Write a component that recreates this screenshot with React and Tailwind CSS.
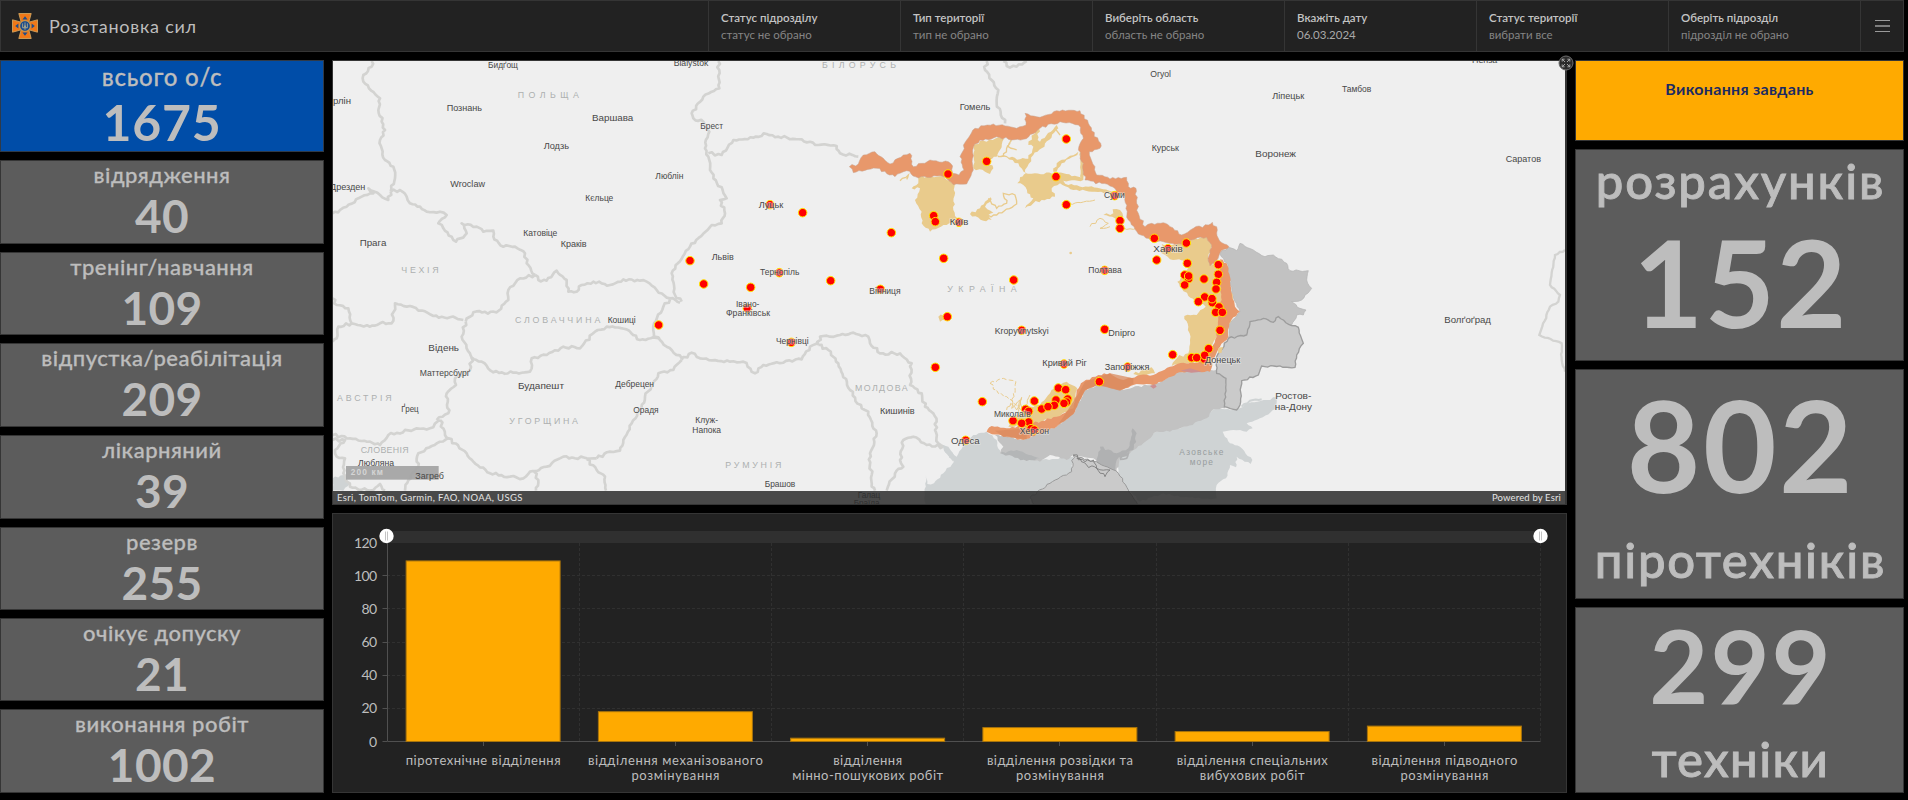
import React from "react";

const filters = [
  ["Статус підрозділу", "статус не обрано"],
  ["Тип території", "тип не обрано"],
  ["Виберіть область", "область не обрано"],
  ["Вкажіть дату", "06.03.2024"],
  ["Статус території", "вибрати все"],
  ["Оберіть підрозділ", "підрозділ не обрано"],
];

const stats = [
  ["відрядження", "40", "h-[84px]"],
  ["тренінг/навчання", "109", "h-[83px]"],
  ["відпустка/реабілітація", "209", "h-[84px]"],
  ["лікарняний", "39", "h-[84px]"],
  ["резерв", "255", "h-[83px]"],
  ["очікує допуску", "21", "h-[83px]"],
  ["виконання робіт", "1002", "h-[84px]"],
];

const bars = [
  [109, ["піротехнічне відділення"], [155]],
  [18, ["відділення механізованого", "розмінування"], [175, 88]],
  [2, ["відділення", "мінно-пошукових робіт"], [69, 151]],
  [8.4, ["відділення розвідки та", "розмінування"], [146, 88]],
  [6, ["відділення спеціальних", "вибухових робіт"], [151, 105]],
  [9.3, ["відділення підводного", "розмінування"], [146, 88]],
];

// Fractal midpoint displacement that turns coarse outlines into natural ones.
function rough(points, amp = 5, closed = false) {
  let seed = 7;
  const rnd = () => {
    seed = (seed * 16807) % 2147483647;
    return seed / 2147483647 - 0.5;
  };
  const src = points.trim().split(/\s+/).map((p) => p.split(",").map(Number));
  if (closed) src.push(src[0]);
  const out = [src[0]];
  for (let i = 1; i < src.length; i++) {
    const [x0, y0] = src[i - 1];
    const [x1, y1] = src[i];
    const len = Math.hypot(x1 - x0, y1 - y0) || 1;
    const n = Math.max(1, Math.round(len / 9));
    for (let k = 1; k < n; k++) {
      const d = rnd() * amp * 2;
      const t = k / n;
      out.push([x0 + (x1 - x0) * t - ((y1 - y0) / len) * d, y0 + (y1 - y0) * t + ((x1 - x0) / len) * d]);
    }
    out.push([x1, y1]);
  }
  return "M" + out.map((p) => p[0].toFixed(1) + " " + p[1].toFixed(1)).join("L") + (closed ? "Z" : "");
}

const bordersWest = [
  "125,3 125,20 100,45 100,65 150,115 145,150 165,210 150,240 165,300 190,320 195,355 182,395",
  "182,395 175,420 150,405 115,385 130,400 95,410 50,440 30,450 8,460",
  "182,395 210,390 230,410 240,430 270,440 290,455 330,455 350,465 325,490 340,505 365,530 378,545 410,520 395,490 440,500 460,515 490,512 490,530 520,560 555,560 585,580 590,610 615,645",
  "615,645 625,660 650,662 680,632 710,660 715,695 740,695 755,675 790,665 815,670 840,675 880,658 930,662 950,665 980,690 1020,715 1050,728",
  "615,645 570,655 535,690 535,720 500,757 430,757 407,785",
  "8,715 20,735 55,745 65,790 120,800 150,790 185,790 195,730 240,738 310,768 360,772 400,780",
  "65,790 25,800 20,835 8,845",
  "407,785 395,830 420,880 425,893 455,905 490,937 550,938 600,935 605,895 650,885 700,860 750,865 795,815 830,800 890,808 930,840 970,832 990,835",
  "425,893 420,930 375,955 378,975 350,1000 355,1060 320,1080",
  "8,1125 60,1135 120,1145 150,1155 175,1125 260,1105 300,1105 330,1080",
  "330,1080 345,1125 355,1135 265,1180 260,1205 265,1220 235,1260 225,1292",
  "8,1140 45,1140 15,1170 20,1190 45,1195 40,1240 60,1280 120,1292 150,1272 165,1292",
  "355,1135 410,1180 430,1205 480,1240 540,1250 580,1255 600,1235 650,1220 700,1190 770,1195 800,1195",
  "612,1235 625,1260 618,1292",
  "770,1198 800,1230 825,1250 828,1292",
  "800,1195 840,1175 870,1172 880,1140 905,1090 930,1050 945,1010 985,940 1030,930 1055,900",
  "1165,3 1168,85 1120,110 1085,160 1090,175 1120,185 1138,215 1125,265 1135,290 1140,330 1190,415 1170,420 1185,460 1175,490 1145,495 1080,560 1025,640 1035,705 1055,725",
  "1020,718 1000,740 972,790 972,830 985,832 1010,860 1055,895",
  "1055,900 1085,878 1110,895 1200,905 1240,905 1275,940 1300,915 1340,907 1415,898 1440,860 1465,845",
  "1135,280 1175,285 1210,240 1270,233 1310,222 1345,230 1415,238 1465,255 1520,258 1530,280 1585,290",
];

const bordersMid = [
  "235,855 240,830 270,830 300,825 340,818 385,830 390,850 420,880 480,880 515,910 510,975 545,1000 555,1040 580,1060 590,1085 585,1110 595,1150 610,1160",
  "235,855 265,870 295,910 330,990 365,1045 385,1055 410,1120 390,1180 395,1280 405,1292",
  "610,1160 560,1155 520,1130 490,1140 480,1200 490,1220 465,1240 440,1292",
  "740,3 735,30 775,90 770,130 795,190",
  "790,3 800,18 830,20 860,3",
];

const borderEast = "1335,570 1305,585 1290,675 1320,705 1315,725 1290,740 1258,825 1325,850 1325,900 1335,935";

const dotsWest = [[1080, 602], [1121, 672], [986, 795], [1252, 745]];
const dotsMid = [
  [32, 682], [90, 434], [188, 458], [118, 638], [272, 662], [421, 688], [154, 847], [454, 518], [611, 595], [624, 342], [740, 304], [948, 350],
  [979, 237], [979, 434], [581, 467], [586, 485], [657, 487], [821, 660], [622, 770], [845, 811], [1094, 808], [1094, 631], [1124, 407],
  [1140, 482], [1140, 505], [586, 922], [972, 912], [1163, 921], [1078, 965], [727, 1025], [883, 1023], [955, 984], [977, 989], [948, 1020],
  [983, 1017], [980, 1026], [972, 1030], [943, 1036], [905, 1047], [924, 1040], [857, 1048], [866, 1054], [819, 1082], [866, 1086], [845, 1090],
  [873, 1106], [883, 1110], [677, 1141], [1243, 535], [1250, 600],
];
const dotsEast = [
  [199, 549], [144, 566], [202, 610], [295, 614], [295, 643], [194, 645], [206, 656], [206, 648], [194, 675], [252, 657], [290, 667], [288, 687],
  [254, 711], [277, 728], [276, 716], [235, 725], [297, 741], [287, 757], [307, 757], [300, 811], [266, 866], [253, 897], [254, 886], [215, 893],
  [230, 893], [158, 884],
];

// label, centre x, baseline y, width
const cities = [
  ["Бидґощ", 519, 23, 90], ["Bialystok", 1083, 19, 104], ["рлін", 36, 131, 54], ["Познань", 403, 153, 106], ["Варшава", 848, 184, 124],
  ["Лодзь", 679, 267, 76], ["Брест", 1145, 208, 68], ["Люблін", 1018, 357, 84], ["Дрезден", 53, 391, 106], ["Wroclaw", 413, 381, 104],
  ["Кєльце", 808, 423, 84], ["Катовіце", 631, 528, 102], ["Краків", 731, 562, 78], ["Прага", 129, 559, 80], ["Львів", 1178, 600, 66],
  ["Кошиці", 875, 788, 84], ["Відень", 341, 872, 92], ["Маттерсбурґ", 345, 949, 152], ["Будапешт", 633, 988, 138], ["Дебрецен", 914, 982, 116],
  ["Ґрец", 240, 1057, 52], ["Орадя", 948, 1059, 76], ["Клуж-", 1130, 1090, 68], ["Напока", 1130, 1118, 86], ["Любляна", 138, 1219, 108],
  ["Загреб", 299, 1256, 86], ["Івано-", 1253, 740, 70], ["Франківськ", 1254, 769, 132], ["Луцьк", 1323, 443, 74], ["Тернопіль", 1349, 646, 118],
  ["Вінниця", 1665, 702, 94], ["Чернівці", 1387, 853, 98], ["Київ", 1887, 495, 56], ["Гомель", 1935, 150, 92], ["Кишинів", 1702, 1063, 104],
  ["Одеса", 1906, 1152, 86], ["Брашов", 1350, 1281, 92], ["Галац", 1617, 1314, 68], ["Браїла", 1610, 1339, 78], ["Миколаїв", 2047, 1072, 110],
  ["Херсон", 2113, 1122, 88], ["Kropyvnytskyi", 2075, 821, 162], ["Кривий Ріг", 2204, 917, 134], ["Dnipro", 2375, 828, 80],
  ["Запоріжжя", 2391, 930, 134], ["Полтава", 2325, 640, 100], ["Суми", 2353, 415, 62], ["Oryol", 2492, 51, 62], ["Ліпецьк", 2875, 117, 96],
  ["Тамбов", 3080, 96, 88], ["Пенза", 3464, 8, 76], ["Курськ", 2506, 272, 82], ["Воронеж", 2837, 291, 122], ["Саратов", 3580, 306, 106],
  ["Волґоґрад", 3413, 790, 140], ["Харків", 2514, 575, 88], ["Донецьк", 2678, 909, 106], ["Ростов-", 2890, 1016, 108], ["на-Дону", 2890, 1049, 112],
];
const countries = [
  ["ПОЛЬЩА", 655, 114, 184], ["ЧЕХІЯ", 270, 640, 112], ["СЛОВАЧЧИНА", 683, 789, 256], ["АВСТРІЯ", 103, 1022, 164], ["УГОРЩИНА", 641, 1091, 206],
  ["СЛОВЕНІЯ", 164, 1180, 144], ["РУМУНІЯ", 1270, 1224, 168], ["МОЛДОВА", 1654, 992, 158], ["УКРАЇНА", 1956, 697, 208], ["БІЛОРУСЬ", 1587, 25, 222],
];

const seas = [["Азовське", 2614, 1184, 132], ["море", 2614, 1214, 70]];

const orangeNorth =
  "328,320 355,312 370,285 405,275 430,295 450,312 490,285 510,280 520,320 570,300 625,305 638,318 638,340 657,345 672,330 660,290 680,240 705,205 760,192 830,205 858,195 855,160 900,172 950,152 1020,152 1045,190 1055,212 1082,250 1080,265 1048,275 1065,320 1070,345 1110,357 1160,352 1165,380 1188,385 1190,430 1195,460 1215,500 1235,490 1270,488 1290,500 1325,525 1360,505 1405,495 1417,487 1432,510 1435,535 1467,560 1440,578 1425,610 1410,618 1404,595 1415,555 1400,532 1355,540 1325,553 1290,550 1250,545 1195,522 1165,480 1155,410 1110,378 1035,360 1030,310 1015,270 1030,235 1015,195 960,185 900,205 850,238 815,240 770,230 720,240 700,262 700,330 680,372 640,374 610,350 535,354 500,332 465,350 410,325 340,338";
const orangeEast =
  "1440,598 1460,610 1470,650 1475,700 1485,740 1500,755 1480,772 1468,790 1465,830 1440,860 1425,890 1410,935 1360,935 1310,940 1250,972 1220,972 1180,975 1140,990 1075,975 1035,992 1000,1062 950,1100 850,1140 790,1130 740,1115 755,1098 800,1105 860,1095 950,1070 1000,1045 1010,990 1030,965 1075,945 1110,940 1150,960 1200,945 1240,945 1290,920 1330,908 1380,905 1410,870 1430,830 1435,770 1445,720 1440,650";
const yellow = [
  "535,350 610,350 645,372 640,450 652,475 620,495 570,515 545,490 545,455 525,420 540,385 515,385 535,370",
  "700,262 720,243 740,245 775,232 792,236 785,262 770,290 740,300 760,325 750,342 735,335 700,325",
  "885,210 897,205 893,240 900,245 950,195 955,205 905,265 880,285 862,320 855,340 885,340 945,338 1030,350 1030,360 970,362 985,375 1045,380 1125,395 1120,402 1000,390 960,370 935,385 945,410 905,420 880,430 855,445 880,415 862,400 850,375 832,370 840,352 860,340 835,310 800,292 775,292 770,286 800,288 840,298 865,296 880,260 865,255",
  "1020,275 1030,310 1030,352 1020,350",
  "940,335 950,310 1015,275 1012,285 965,310 950,335",
  "690,462 720,445 735,425 752,412 755,418 735,440 760,458 745,465 755,480 730,482",
  "1090,465 1120,460 1118,448 1140,450 1150,470 1140,495 1125,475",
  "595,770 620,762 625,775 600,785",
  "930,1000 945,985 980,965 1012,985 1000,1045 950,1072 860,1097 805,1100 810,1078 870,1040 900,1035",
  "1265,552 1265,580 1290,598 1335,600 1345,625 1330,650 1312,665 1325,685 1345,708 1380,730 1397,740 1370,765 1333,768 1345,800 1350,840 1345,880 1330,890 1318,885 1295,918 1380,907 1410,870 1430,830 1470,790 1480,720 1445,610 1425,615 1404,600 1418,555 1400,530 1355,538 1325,553",
  "1180,942 1235,922 1245,940 1200,950",
];

function Group({ dx, children }) {
  return <g transform={`translate(${dx} 60) scale(.33333)`}>{children}</g>;
}

function Dots({ list }) {
  return list.map(([x, y], i) => <circle key={i} cx={x} cy={y} r="12.8" fill="#ff0000" stroke="#ffe400" strokeWidth="3" />);
}

function MapView() {
  return (
    <svg viewBox="333 61 1232 443" className="block h-[443px] w-[1232px]" fontFamily="'Liberation Sans', Arial, sans-serif">
      <rect x="333" y="61" width="1232" height="443" fill="#efefef" />
      <Group dx={740}>
        <path d={rough("608,1155 650,1190 672,1150 700,1125 740,1115 770,1140 780,1180 900,1200 1000,1190 995,1235 930,1270 870,1310 870,1340 555,1340 558,1245 562,1272 582,1270 610,1240 642,1205 612,1170", 3, true)} fill="#cfd3d4" />
        <path d={rough("1130,1195 1170,1170 1250,1115 1340,1100 1420,1048 1490,1048 1525,1030 1580,1020 1610,1012 1608,1048 1560,1075 1520,1090 1538,1105 1520,1115 1480,1110 1448,1115 1470,1150 1500,1160 1537,1200 1532,1212 1490,1190 1488,1222 1470,1215 1458,1255 1430,1275 1430,1315 1330,1312 1270,1300 1200,1325 1165,1290 1135,1240", 3, true)} fill="#cfd3d4" />
        <path d={rough("1440,580 1465,562 1490,572 1500,550 1540,570 1575,590 1600,585 1640,610 1650,632 1705,632 1700,660 1715,685 1685,720 1655,725 1680,745 1698,750 1690,765 1670,765 1655,795 1465,835 1468,790 1500,755 1475,700 1465,620", 3, true)} fill="#c2c2c2" stroke="#b2b2b2" strokeWidth="2" />
        <path d={rough("1430,930 1458,955 1455,1045 1420,1048 1400,1075 1340,1100 1290,1115 1250,1115 1210,1150 1170,1180 1140,1195 1130,1235 1110,1215 1060,1195 1000,1185 980,1200 930,1185 900,1205 830,1190 780,1180 790,1160 765,1125 850,1138 950,1100 1000,1060 1035,990 1075,975 1140,990 1250,970 1310,935", 3, true)} fill="#c2c2c2" />
        <path d={rough("780,1180 830,1170 900,1195 860,1203", 3, true)} fill="#b4b6b7" />
        <path d={rough("1080,1160 1130,1180 1165,1165 1178,1105 1190,1120 1180,1170 1130,1200 1125,1240 1070,1210", 4, true)} fill="#b0b1b2" />
        <path d={rough("1465,835 1520,825 1530,785 1570,775 1600,787 1615,770 1655,797 1675,802 1690,850 1670,885 1665,922 1565,918 1555,945 1505,962 1500,1035 1490,1050 1453,1040 1458,955 1430,940 1430,890", 3, true)} fill="#cacaca" stroke="#9d9d9d" strokeWidth="4" />
        <path d={rough("1000,1185 995,1235 930,1270 870,1312 890,1340 1200,1340 1165,1290 1135,1240 1110,1225 1060,1205", 4, true)} fill="#cacaca" stroke="#9a9a9a" strokeWidth="3" />
        <path d={rough("1000,1185 1035,1205 1060,1200 1070,1225 1110,1230 1095,1250 1070,1225 1040,1215 1010,1195", 6)} fill="none" stroke="#777" strokeWidth="2.5" />
        <path d={rough("1140,1195 1165,1180 1160,1195 1140,1198", 2)} fill="none" stroke="#b0b1b2" strokeWidth="5" />
        <path d={rough("1505,1040 1530,1022 1565,1018", 2)} fill="none" stroke="#cfd3d4" strokeWidth="6" />
      </Group>
      <Group dx={330}>
        <path d={rough("8,1255 40,1245 60,1270 40,1292 8,1292", 3, true)} fill="#cfd3d4" />
        <g fill="none" stroke="#d3d3d1" strokeWidth="8" strokeLinejoin="round">
          {bordersWest.map((p, i) => <path key={i} d={rough(p, 4.5)} />)}
        </g>
      </Group>
      <Group dx={740}>
        <g fill="none" stroke="#d3d3d1" strokeWidth="8" strokeLinejoin="round">
          {bordersMid.map((p, i) => <path key={i} d={rough(p, 5)} />)}
        </g>
        <path d="M608 1155L625 1160L645 1190L640 1205L612 1172Z" fill="#cfd3d4" />
        <g fill="#e9cb8c">
          {yellow.map((p, i) => <path key={i} d={rough(p, 4, true)} />)}
        </g>
        <g fill="none" stroke="#e9cb8c" strokeWidth="4">
          <path d={rough("735,470 770,465 830,432 825,405 790,400 800,430 770,445 745,415", 4)} />
          <path d={rough("790,290 815,235 805,260 830,270", 3)} />
          <path d={rough("980,434 1065,420", 2)} strokeWidth="3" />
          <path d={rough("1050,500 1080,475 1105,490 1080,505 1110,500", 4)} strokeWidth="3" />
          <path d={rough("750,970 790,955 828,965 825,1000", 3)} strokeWidth="3" strokeDasharray="14 7" />
          <path d={rough("750,970 775,1000 800,1010 830,1035 845,1050", 4)} strokeWidth="3" strokeDasharray="12 5" />
          <path d={rough("820,1000 815,1045 840,1020 850,1055 870,1005", 3)} strokeWidth="3" />
          <path d={rough("800,1050 812,1030 830,1050 845,1012 835,1060", 3)} strokeWidth="3" />
          <path d={rough("480,362 505,345 500,358", 2)} />
          <path d={rough("1140,505 1180,508 1195,505", 2)} strokeWidth="3" />
          <path d="M945 205L960 225" />
        </g>
        <circle cx="992" cy="579" r="4" fill="#e9cb8c" />
        <path d={rough(orangeNorth, 4, true)} fill="#e8986b" stroke="#c9a48f" strokeWidth="1.5" />
        <path d={rough(orangeEast, 3, true)} fill="#e8986b" />
        <path d="M1035 965L1110 940L1180 955L1180 972L1140 992L1075 975L1035 990L1000 1062L950 1100L1010 1010Z" fill="#da8a5e" opacity=".75" />
        <path d="M765 1112L860 1105L860 1138L790 1130Z" fill="#da8a5e" opacity=".7" />
        <path d="M1322 932L1350 925L1385 935L1355 938ZM1230 978L1245 973L1250 980L1240 986Z" fill="#cd8f90" />
        <path d={rough("1435,865 1450,862 1445,878 1435,880", 2, true)} fill="#e9cb8c" />
      </Group>
      <Group dx={1120}>
        <path d={rough(borderEast, 2)} fill="none" stroke="#d3d3d1" strokeWidth="7" />
        <Dots list={dotsEast} />
      </Group>
      <Group dx={740}><Dots list={dotsMid} /></Group>
      <Group dx={330}>
        <Dots list={dotsWest} />
        <rect x="48" y="1218" width="278" height="41" fill="#a4a4a4" opacity=".93" />
        <text x="62" y="1244" fontSize="25" fontWeight="700" fill="#d5d5d5" textLength="97">200 км</text>
        <g fontSize="26" textAnchor="middle" fill="#484848">
          {cities.map(([t, x, y, w]) => {
            const overBar = t === "Загреб" || t === "Любляна";
            return (
              <text
                key={t}
                x={x}
                y={y}
                textLength={w}
                lengthAdjust="spacingAndGlyphs"
                stroke="#efefef"
                strokeOpacity={overBar ? 0 : 0.5}
                strokeWidth="5"
                paintOrder="stroke"
                strokeLinejoin="round"
              >
                {t}
              </text>
            );
          })}
        </g>
        <g fontSize="26.5" textAnchor="middle" fill="#adb0b0">
          {countries.map(([t, x, y, w]) => (
            <text key={t} x={x} y={y} textLength={w}>{t}</text>
          ))}
        </g>
        <g fontSize="25" textAnchor="middle" fill="#989d9e">
          {seas.map(([t, x, y, w]) => (
            <text key={t} x={x} y={y} textLength={w}>{t}</text>
          ))}
        </g>
      </Group>
    </svg>
  );
}

function ChartView() {
  const x0 = 387;
  const x1 = 1540.5;
  const step = (x1 - x0) / 6;
  const y = (v) => 741.5 - v * 1.6567;
  return (
    <svg viewBox="333 514 1233 278" className="block h-[278px] w-[1233px]" fontFamily="'Lato', 'Open Sans', sans-serif">
      <rect x={x0} y="531" width={x1 - x0} height="12" fill="#303030" />
      <g stroke="#303030" strokeDasharray="3 2">
        {[20, 40, 60, 80, 100, 120].map((v) => <path key={v} d={`M${x0} ${Math.floor(y(v)) + 0.5}H${x1}`} />)}
        {[1, 2, 3, 4, 5, 6].map((k) => <path key={k} d={`M${Math.floor(x0 + step * k) + 0.5} 543V741`} />)}
      </g>
      <path d={`M387.5 543V741.5H${x1}`} fill="none" stroke="#505050" />
      <g fontSize="14" fill="#bdbdbd" textAnchor="end">
        {[0, 20, 40, 60, 80, 100, 120].map((v) => (
          <g key={v}>
            <path d={`M382.5 ${Math.floor(y(v)) + 0.5}H387`} stroke="#505050" />
            <text x="377" y={y(v) + 5} textLength={v === 0 ? 7.5 : v < 100 ? 15.5 : 23}>{v}</text>
          </g>
        ))}
      </g>
      {bars.map(([v, lines, widths], i) => {
        const cx = x0 + step * (i + 0.5);
        return (
          <g key={i}>
            <rect x={cx - 77} y={y(v)} width="154" height={741.5 - y(v)} fill="#ffaa00" stroke="#a8740c" strokeWidth="1" />
            <path d={`M${Math.floor(cx) + 0.5} 742V746`} stroke="#505050" />
            <g fontSize="13" fill="#bdbdbd" textAnchor="middle">
              {lines.map((t, k) => <text key={k} x={cx} y={764.5 + k * 15} textLength={widths[k]}>{t}</text>)}
            </g>
          </g>
        );
      })}
      {[x0 - 0.5, x1].map((x) => (
        <g key={x}>
          <circle cx={x} cy="536" r="7.2" fill="#fff" />
          <path d={`M${x - 1} 531.5V540.5M${x + 1} 531.5V540.5`} stroke="#b5b5b5" strokeWidth=".8" />
        </g>
      ))}
    </svg>
  );
}

function Emblem() {
  return (
    <svg viewBox="-13 -13 26 26" className="h-[26px] w-[26px]">
      {[0, 90, 180, 270].map((a) => (
        <g key={a} transform={`rotate(${a})`}>
          <path d="M-3.6 -3L-6.2 -12.5H6.2L3.6 -3Z" fill="#f07818" stroke="#cfa25c" strokeWidth=".9" />
          <path d="M-2.6 -6.6L0 -9.8L2.6 -6.6Z" fill="#1d4c8c" />
        </g>
      ))}
      <circle r="5.4" fill="#1d4c8c" stroke="#d3a04f" strokeWidth="1" />
      <path d="M0 -3.6V3.8M-2.4 -2.6V1.8H2.4V-2.6M-1.2 1.8L0 -.5L1.2 1.8" fill="none" stroke="#b9b08a" strokeWidth=".8" />
    </svg>
  );
}

export default function App() {
  return (
    <div className="flex h-[800px] w-[1908px] flex-col overflow-hidden bg-black font-['Lato','Open_Sans',sans-serif] text-[#bdbdbd]">
      <header className="flex h-[52px] w-[1904px] border border-[#353535] bg-[#222222]">
        <div className="flex w-[707px] items-center gap-[11px] pl-[11px]">
          <Emblem />
          <h1 className="text-[18px] leading-none tracking-[0.75px]">Розстановка сил</h1>
        </div>
        {filters.map(([title, value]) => (
          <div key={title} className="flex w-[192px] flex-col justify-center border-l border-[#353535] pb-px pl-3 text-[11.5px] leading-[17px]">
            <span className="font-semibold text-[#c4c4c4]">{title}</span>
            <span className={title === "Вкажіть дату" ? "text-[#a9a9a9]" : "text-[#858585]"}>{value}</span>
          </div>
        ))}
        <div className="flex flex-1 flex-col items-center justify-center gap-1 border-l border-[#353535]">
          <span className="h-px w-[15px] bg-[#9a9a9a]" />
          <span className="h-[2px] w-[15px] bg-[#7d7d7d]" />
          <span className="h-px w-[15px] bg-[#9a9a9a]" />
        </div>
      </header>

      <div className="flex pt-2">
        <aside className="flex w-[324px] flex-col gap-2 text-center whitespace-nowrap">
          <div className="h-[92px] border border-[#2f3a48] bg-[#004da8]">
            <div className="text-[24px] leading-[31px] font-medium tracking-[0.8px] [-webkit-text-stroke:0.3px_#bdbdbd]">всього о/с</div>
            <div className="text-[50px] leading-[61px] font-bold tracking-[0.8px]">1675</div>
          </div>
          {stats.map(([label, value, height]) => (
            <div key={label} className={`${height} overflow-hidden border border-[#353535] bg-[#5c5c5c]`}>
              <div className="text-[22px] leading-[28px] font-medium tracking-[0.5px] [-webkit-text-stroke:0.3px_#bdbdbd]">{label}</div>
              <div className="text-[46px] leading-[53px] font-bold tracking-[0.4px]">{value}</div>
            </div>
          ))}
        </aside>

        <main className="ml-2 flex w-[1235px] flex-col gap-2">
          <section className="relative h-[445px] border border-[#353535] bg-[#353535]">
            <MapView />
            <div className="absolute bottom-0 left-0 flex h-[13px] w-[1232px] items-center justify-between bg-[#2b2b2b]/85 px-1 text-[9.5px] leading-none text-[#e4e4e4]">
              <span className="tracking-[0.35px]">Esri, TomTom, Garmin, FAO, NOAA, USGS</span>
              <span className="tracking-[0.15px]">Powered by Esri</span>
            </div>
            <svg viewBox="-8 -8 16 16" className="absolute -top-[6px] -right-[8px] h-4 w-4">
              <circle r="7" fill="#2b2b2b" stroke="#6e6e6e" strokeWidth="1" />
              <path d="M-3.8 -1.4V-3.8H-1.4M-3.8 -3.8L-1 -1M3.8 -1.4V-3.8H1.4M3.8 -3.8L1 -1M-3.8 1.4V3.8H-1.4M-3.8 3.8L-1 1M3.8 1.4V3.8H1.4M3.8 3.8L1 1" fill="none" stroke="#b0b0b0" strokeWidth=".9" />
            </svg>
          </section>
          <section className="h-[280px] border border-[#353535] bg-[#222222]">
            <ChartView />
          </section>
        </main>

        <aside className="ml-2 flex w-[329px] flex-col gap-2 text-center font-medium whitespace-nowrap">
          <div className="h-[81px] border border-[#353535] bg-[#ffaa00] pt-4 text-[16px] leading-6 font-bold tracking-[0.3px] text-[#1b2a63]">
            Виконання завдань
          </div>
          <div className="h-[212px] border border-[#353535] bg-[#5c5c5c]">
            <div className="pl-[2px] text-[49px] leading-[60px] tracking-[1.9px] [-webkit-text-stroke:0.9px_#bdbdbd]">розрахунків</div>
            <div className="pl-[2px] text-[121px] leading-[143px] font-bold tracking-[1.5px]">152</div>
          </div>
          <div className="h-[230px] border border-[#353535] bg-[#5c5c5c] pt-[10px]">
            <div className="pl-[3px] text-[127px] leading-[128px] font-bold tracking-[2.5px]">802</div>
            <div className="pl-[2px] text-[49px] leading-[103px] tracking-[1.8px] [-webkit-text-stroke:0.9px_#bdbdbd]">піротехніків</div>
          </div>
          <div className="h-[186px] border border-[#353535] bg-[#5c5c5c] pt-[5px]">
            <div className="pl-[3px] text-[102px] leading-[104px] font-bold tracking-[2px]">299</div>
            <div className="pl-[2px] text-[49px] leading-[83px] tracking-[1.4px] [-webkit-text-stroke:0.9px_#bdbdbd]">техніки</div>
          </div>
        </aside>
      </div>
    </div>
  );
}
